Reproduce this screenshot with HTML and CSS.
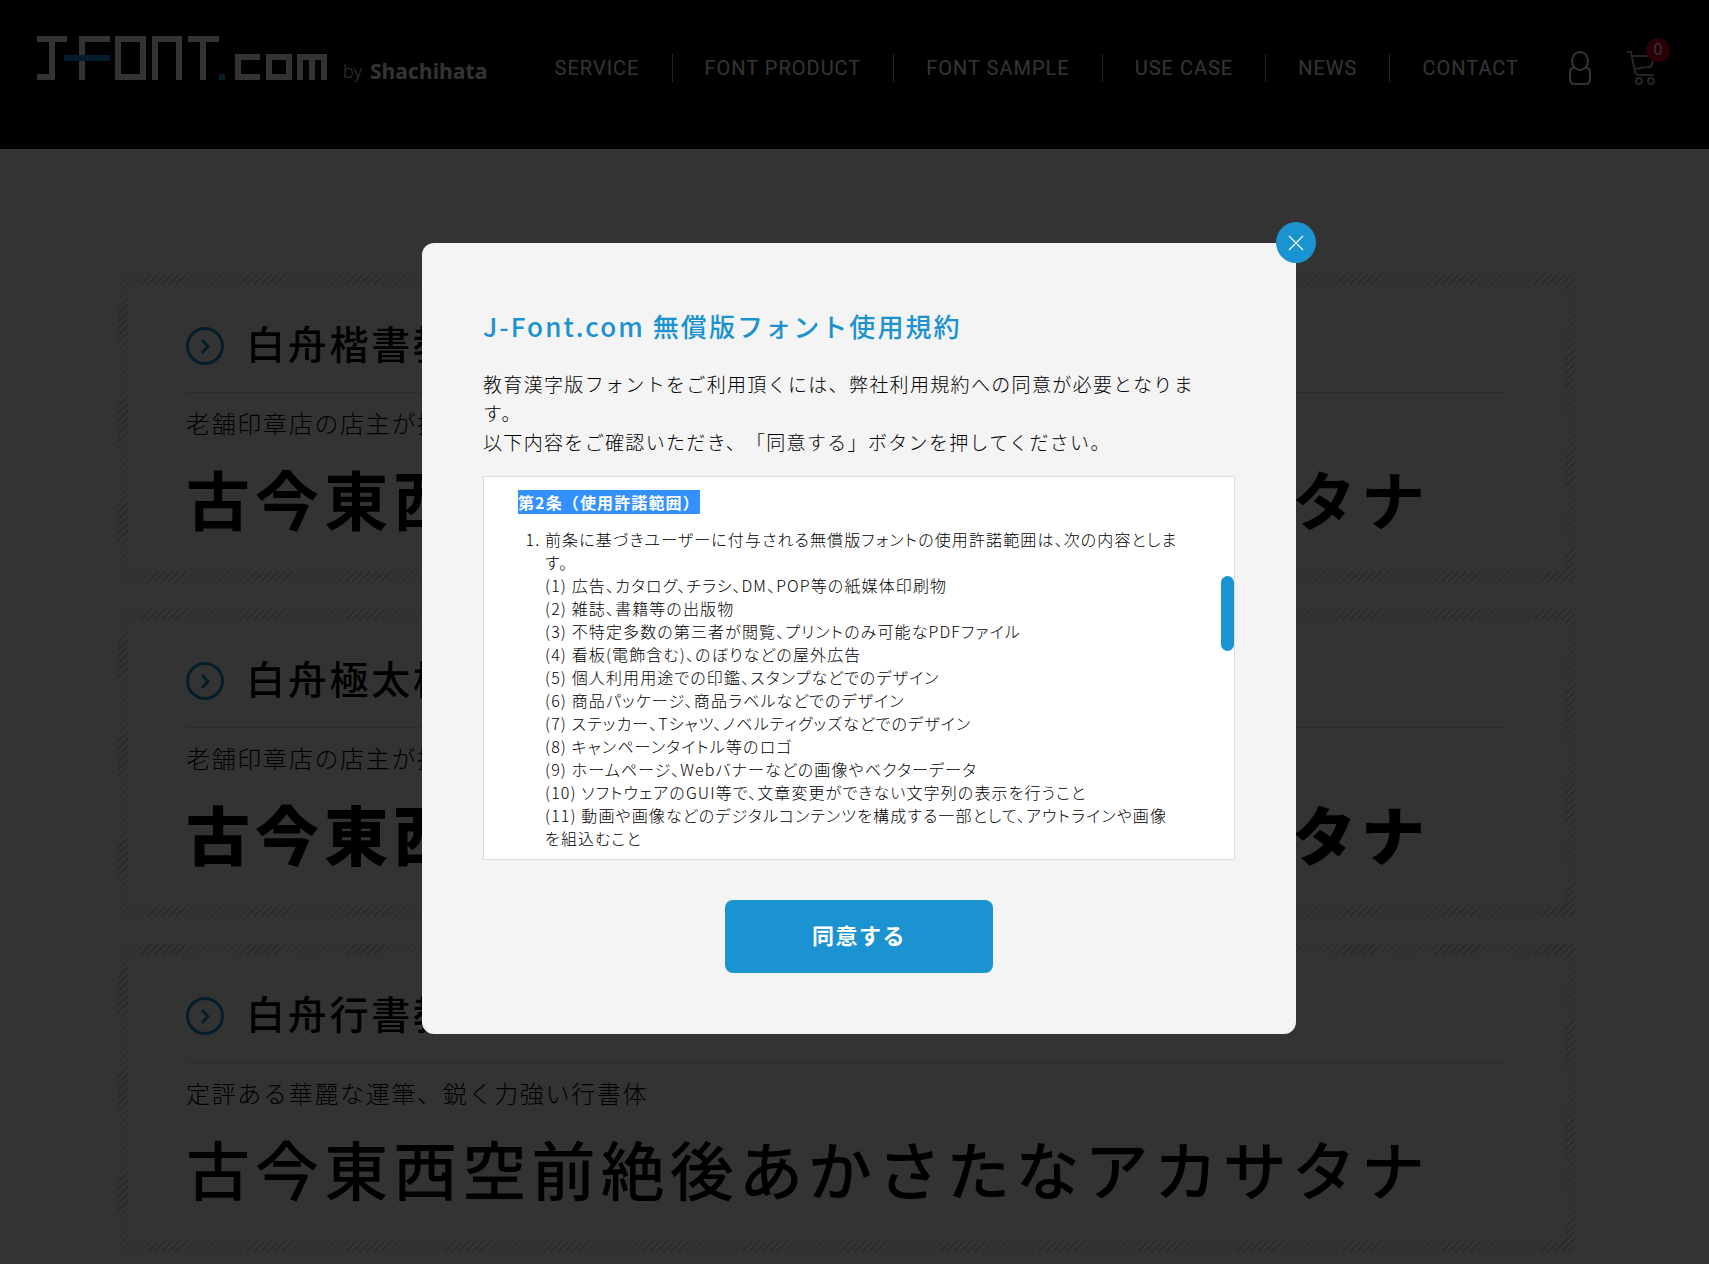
FILE: index.html
```
<!DOCTYPE html>
<html lang="ja">
<head>
  <meta charset="utf-8">
  <meta name="viewport" content="width=device-width, initial-scale=1.0">
  <title>J-FONT.com by Shachihata</title>
  <link rel="stylesheet" href="styles.css">
</head>
<body>

  <header class="header">
    <a class="logo" href="#" aria-label="J-FONT.com by Shachihata">
      <svg class="logo-mark" width="290" height="44" viewBox="0 0 290 44" fill="none" stroke="#fff" stroke-width="6">
        <path d="M0 3H30M15 3V41H0"/>
        <path d="M45 44V3H73"/>
        <path d="M81 3H106V41H81Z"/>
        <path d="M118 44V3H142V44"/>
        <path d="M151 3H182M166 3V44"/>
        <path d="M223 21H201V41H223"/>
        <path d="M232 21H252V41H232Z"/>
        <path d="M263 44V21H287V44M275 21V44"/>
        <path stroke="#1b93d1" d="M27 22H73M182 41H188"/>
      </svg>
      <span class="logo-by">by</span>
      <span class="logo-name">Shachihata</span>
    </a>
    <nav class="nav">
      <a href="#">SERVICE</a>
      <a href="#">FONT PRODUCT</a>
      <a href="#">FONT SAMPLE</a>
      <a href="#">USE CASE</a>
      <a href="#">NEWS</a>
      <a href="#">CONTACT</a>
    </nav>
    <a class="icon user" href="#" aria-label="マイページ">
      <svg width="22" height="34" viewBox="0 0 22 34" fill="none" stroke="#fff" stroke-width="2">
        <ellipse cx="11" cy="10" rx="8" ry="9"/>
        <path d="M5 17C2 17 1 19 1 21V28Q1 33 6 33H16Q21 33 21 28V21C21 19 20 17 17 17"/>
      </svg>
    </a>
    <a class="icon cart" href="#" aria-label="カート">
      <svg width="28" height="34" viewBox="0 0 28 34" fill="none" stroke="#bbb" stroke-width="2">
        <path d="M0 1H4L8 21Q9 24 12 24H27"/>
        <path d="M5 5H27L25 14Q24 16 22 16L7 18"/>
        <circle cx="12" cy="30" r="3"/>
        <circle cx="24" cy="30" r="3"/>
      </svg>
      <span class="badge">0</span>
    </a>
  </header>

  <main class="fonts">
    <section class="card">
      <h2>
        <svg width="38" height="38" viewBox="0 0 38 38" fill="none" stroke="#1b93d1" stroke-width="3"><circle cx="19" cy="19" r="17.5"/><path d="M16 13L22 19.5L16 26"/></svg>
        白舟楷書教漢
      </h2>
      <p class="desc">老舗印章店の店主が揮毫した</p>
      <p class="sample bold">古今東西空前絶後あかさたなアカサタナ</p>
    </section>
    <section class="card">
      <h2>
        <svg width="38" height="38" viewBox="0 0 38 38" fill="none" stroke="#1b93d1" stroke-width="3"><circle cx="19" cy="19" r="17.5"/><path d="M16 13L22 19.5L16 26"/></svg>
        白舟極太楷書教漢
      </h2>
      <p class="desc">老舗印章店の店主が揮毫した</p>
      <p class="sample black">古今東西空前絶後あかさたなアカサタナ</p>
    </section>
    <section class="card">
      <h2>
        <svg width="38" height="38" viewBox="0 0 38 38" fill="none" stroke="#1b93d1" stroke-width="3"><circle cx="19" cy="19" r="17.5"/><path d="M16 13L22 19.5L16 26"/></svg>
        白舟行書教漢
      </h2>
      <p class="desc">定評ある華麗な運筆、鋭く力強い行書体</p>
      <p class="sample">古今東西空前絶後あかさたなアカサタナ</p>
    </section>
  </main>

  <div class="overlay">
    <div class="modal" role="dialog" aria-modal="true" aria-labelledby="modalTitle">
      <button class="close" type="button" aria-label="閉じる">
        <svg width="16" height="16" viewBox="0 0 16 16" stroke="#fff" stroke-width="1.2"><path d="M1 1L15 15M15 1L1 15"/></svg>
      </button>
      <h1 id="modalTitle">J-Font.com 無償版フォント使用規約</h1>
      <p class="lead">教育漢字版フォントをご利用頂くには、弊社利用規約への同意が必要となります。<br>以下内容をご確認いただき、「同意する」ボタンを押してください。</p>
      <div class="terms">
        <h3><mark>第2条（使用許諾範囲）</mark></h3>
        <ol>
          <li>前条に基づきユーザーに付与される無償版フォントの使用許諾範囲は、次の内容とします。<br>
            (1) 広告、カタログ、チラシ、DM、POP等の紙媒体印刷物<br>
            (2) 雑誌、書籍等の出版物<br>
            (3) 不特定多数の第三者が閲覧、プリントのみ可能なPDFファイル<br>
            (4) 看板(電飾含む)、のぼりなどの屋外広告<br>
            (5) 個人利用用途での印鑑、スタンプなどでのデザイン<br>
            (6) 商品パッケージ、商品ラベルなどでのデザイン<br>
            (7) ステッカー、Tシャツ、ノベルティグッズなどでのデザイン<br>
            (8) キャンペーンタイトル等のロゴ<br>
            (9) ホームページ、Webバナーなどの画像やベクターデータ<br>
            (10) ソフトウェアのGUI等で、文章変更ができない文字列の表示を行うこと<br>
            (11) 動画や画像などのデジタルコンテンツを構成する一部として、アウトラインや画像<br>を組込むこと</li>
        </ol>
        <span class="thumb"></span>
      </div>
      <button class="agree" type="button">同意する</button>
    </div>
  </div>

</body>
</html>
```
FILE: styles.css
```
* {
  box-sizing: border-box;
}

body {
  margin: 0;
  height: 100vh;
  overflow: hidden;
  background: #fff;
  color: #000;
  font-family: "Noto Sans CJK JP", sans-serif;
  font-weight: 200;
  text-spacing-trim: space-all;
}

h1, h2, h3, p, ol {
  margin: 0;
  padding: 0;
}

h1, h2, h3, p, ol, button {
  letter-spacing: .07em;
}

a {
  color: #fff;
  text-decoration: none;
}

button {
  border: none;
  padding: 0;
  background: #1b93d1;
  color: #fff;
  font-family: inherit;
  cursor: pointer;
}

/* header */
.header {
  display: flex;
  align-items: flex-start;
  height: 149px;
  padding: 36px 54px 0 37px;
  background: #000;
}

.logo {
  display: flex;
  align-items: flex-end;
  font-family: "Open Sans", sans-serif;
  line-height: 18px;
}

.logo-mark {
  display: block;
}

.logo-by {
  margin-left: 16px;
  font-size: 18px;
  font-weight: 300;
}

.logo-name {
  margin-left: 8px;
  font-size: 21px;
  font-weight: 700;
}

.nav {
  display: flex;
  margin: 18px 18px 0 auto;
  font-family: Roboto, sans-serif;
  font-size: 20px;
  font-weight: 400;
  line-height: 28px;
  letter-spacing: 1px;
}

.nav a {
  padding: 0 32px;
  border-left: 1px solid #bbb;
}

.nav a:first-child {
  border-left: none;
}

.icon {
  position: relative;
  margin-top: 15px;
}

.icon svg {
  display: block;
}

.cart {
  margin-left: 36px;
}

.badge {
  position: absolute;
  top: -13px;
  right: -15px;
  width: 24px;
  height: 24px;
  border-radius: 50%;
  background: #c8001e;
  font-family: Roboto, sans-serif;
  font-size: 16px;
  font-weight: 400;
  line-height: 24px;
  text-align: center;
}

/* font cards */
.fonts {
  display: flex;
  flex-direction: column;
  gap: 27px;
  padding: 125px 134px 0 118px;
}

.card {
  height: 308px;
  padding: 40px 68px 0;
  background:
    linear-gradient(#fff, #fff) center / calc(100% - 20px) calc(100% - 22px) no-repeat,
    repeating-linear-gradient(-45deg, #fff 0, #fff 4px, #ccc 4px, #ccc 5px);
  white-space: nowrap;
}

.card h2 {
  display: flex;
  align-items: flex-start;
  gap: 22px;
  height: 79px;
  border-bottom: 1px solid #ddd;
  font-size: 39px;
  font-weight: 500;
  line-height: 56px;
}

.card h2 svg {
  margin-top: 13px;
}

.desc {
  margin-top: 11px;
  font-size: 24px;
  line-height: 38px;
}

.sample {
  margin-top: 9px;
  font-size: 64px;
  font-weight: 500;
  line-height: 92px;
  letter-spacing: .08em;
}

.sample.bold {
  font-weight: 700;
}

.sample.black {
  font-weight: 900;
}

/* terms modal */
.overlay {
  position: fixed;
  inset: 0;
  display: flex;
  align-items: center;
  justify-content: center;
  padding: 13px 0 0 9px;
  background: rgba(0, 0, 0, .8);
}

.modal {
  position: relative;
  width: 100%;
  max-width: 874px;
  padding: 61px;
  border-radius: 12px;
  background: #f4f4f4;
}

.close {
  position: absolute;
  top: -21px;
  right: -20px;
  display: flex;
  align-items: center;
  justify-content: center;
  width: 40px;
  height: 41px;
  border-radius: 50%;
}

.modal h1 {
  color: #1b93d1;
  font-size: 26px;
  font-weight: 500;
  line-height: 44px;
  letter-spacing: .08em;
}

.lead {
  margin: 21px 0 20px;
  padding-right: 16px;
  font-size: 19px;
  line-height: 29px;
}

.terms {
  position: relative;
  height: 384px;
  overflow: hidden;
  padding: 13px 47px 0 34px;
  border: 1px solid #ddd;
  background: #fff;
}

.terms h3 {
  font-size: 16px;
  font-weight: 700;
  line-height: 24px;
}

.terms mark {
  background: #3390ff;
  color: #fff;
}

.terms ol {
  margin-top: 14px;
  padding-left: 27px;
  font-size: 16px;
  line-height: 23px;
  font-feature-settings: "palt";
}

.thumb {
  position: absolute;
  top: 99px;
  right: 0;
  width: 13px;
  height: 75px;
  border-radius: 7px;
  background: #1b93d1;
}

.agree {
  display: block;
  width: 268px;
  height: 73px;
  margin: 40px auto 0;
  padding-bottom: 6px;
  border-radius: 8px;
  font-size: 22px;
  font-weight: 700;
}
```
